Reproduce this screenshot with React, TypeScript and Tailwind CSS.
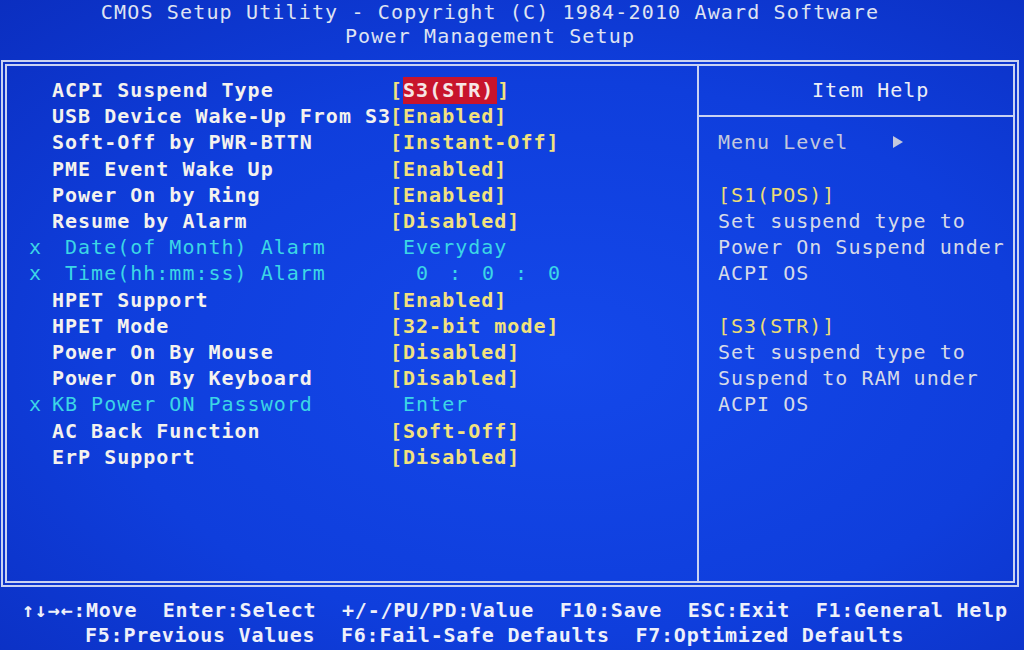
type Item = {
  label: string;
  value: string;
  off?: boolean;
  sel?: boolean;
  time?: boolean;
};

const items: Item[] = [
  { label: 'ACPI Suspend Type', value: 'S3(STR)', sel: true },
  { label: 'USB Device Wake-Up From S3', value: '[Enabled]' },
  { label: 'Soft-Off by PWR-BTTN', value: '[Instant-Off]' },
  { label: 'PME Event Wake Up', value: '[Enabled]' },
  { label: 'Power On by Ring', value: '[Enabled]' },
  { label: 'Resume by Alarm', value: '[Disabled]' },
  { label: ' Date(of Month) Alarm', value: ' Everyday', off: true },
  { label: ' Time(hh:mm:ss) Alarm', value: '', off: true, time: true },
  { label: 'HPET Support', value: '[Enabled]' },
  { label: 'HPET Mode', value: '[32-bit mode]' },
  { label: 'Power On By Mouse', value: '[Disabled]' },
  { label: 'Power On By Keyboard', value: '[Disabled]' },
  { label: 'KB Power ON Password', value: ' Enter', off: true },
  { label: 'AC Back Function', value: '[Soft-Off]' },
  { label: 'ErP Support', value: '[Disabled]' },
];

const help: { text: string; tone?: 'yellow' }[] = [
  { text: '' },
  { text: '[S1(POS)]', tone: 'yellow' },
  { text: 'Set suspend type to' },
  { text: 'Power On Suspend under' },
  { text: 'ACPI OS' },
  { text: '' },
  { text: '[S3(STR)]', tone: 'yellow' },
  { text: 'Set suspend type to' },
  { text: 'Suspend to RAM under' },
  { text: 'ACPI OS' },
];

const Row = ({ item }: { item: Item }) => (
  <div className="flex items-center h-[26.2px] whitespace-pre">
    <span className="w-[45px] pl-[22px] font-normal text-[#3cd6e6]">{item.off ? 'x' : ''}</span>
    <span className={`w-[338px] ${item.off ? 'font-normal text-[#3cd6e6]' : 'text-[#f4f2ee]'}`}>{item.label}</span>
    {item.sel ? (
      <span className="flex items-center text-[#f2e27e]">
        [<span className="bg-[#c8142c] text-[#f6e6e6] leading-[27px] pr-[3px]">S3(STR)</span>]
      </span>
    ) : item.time ? (
      <span className="flex font-normal text-[#3cd6e6] ml-[26px]">
        <span className="w-[33px]">0</span>
        <span className="w-[33px]">:</span>
        <span className="w-[33px]">0</span>
        <span className="w-[33px]">:</span>
        <span className="w-[33px]">0</span>
      </span>
    ) : (
      <span className={item.off ? 'font-normal text-[#3cd6e6]' : 'text-[#f2e27e]'}>{item.value}</span>
    )}
  </div>
);

export default function App() {
  return (
    <div className="w-[1024px] h-[650px] overflow-hidden flex flex-col bg-[radial-gradient(ellipse_90%_85%_at_55%_55%,#1448ea_0%,#0f3edc_50%,#0a2ab8_100%)] font-['DejaVu_Sans_Mono',monospace] text-[20px]">
      <header className="h-[60px] pr-[44px] flex flex-col items-center text-[#dfe3f2] tracking-[1.15px] leading-[24px]">
        <div>CMOS Setup Utility - Copyright (C) 1984-2010 Award Software</div>
        <div>Power Management Setup</div>
      </header>

      <div className="ml-[1px] w-[1018px] h-[527px] border-2 border-[#c9d2f2] p-[2px]">
        <div className="h-full border-2 border-[#c9d2f2] flex">
          <section className="w-[690px] pt-[11px] font-bold tracking-[1px]">
            {items.map((item, i) => (
              <Row key={i} item={item} />
            ))}
          </section>

          <aside className="flex-1 border-l-2 border-[#c9d2f2] pt-[11px] tracking-[1px] text-[#d6dae8]">
            <div className="h-[26.2px] flex items-center pl-[113px] text-[#eceef6]">Item Help</div>
            <div className="h-[26.2px] flex items-center">
              <div className="h-[2px] w-full bg-[#c9d2f2]" />
            </div>
            <div className="h-[26.2px] flex items-center pl-[19px] text-[#c4c8dc]">
              Menu Level
              <svg width="10" height="12" viewBox="0 0 10 12" className="ml-[45px]">
                <polygon points="0,0 10,6 0,12" fill="#c4c8dc" />
              </svg>
            </div>
            {help.map((h, i) => (
              <div
                key={i}
                className={`h-[26.2px] flex items-center pl-[19px] whitespace-pre ${h.tone === 'yellow' ? 'text-[#ecdc78]' : ''}`}
              >
                {h.text}
              </div>
            ))}
          </aside>
        </div>
      </div>

      <footer className="pt-[11px] leading-[25px] tracking-[0.76px] font-bold whitespace-pre text-[#eef0fa]">
        <div className="pl-[22px]">↑↓→←:Move  Enter:Select  +/-/PU/PD:Value  F10:Save  ESC:Exit  F1:General Help</div>
        <div className="pl-[85px]">F5:Previous Values  F6:Fail-Safe Defaults  F7:Optimized Defaults</div>
      </footer>
    </div>
  );
}
